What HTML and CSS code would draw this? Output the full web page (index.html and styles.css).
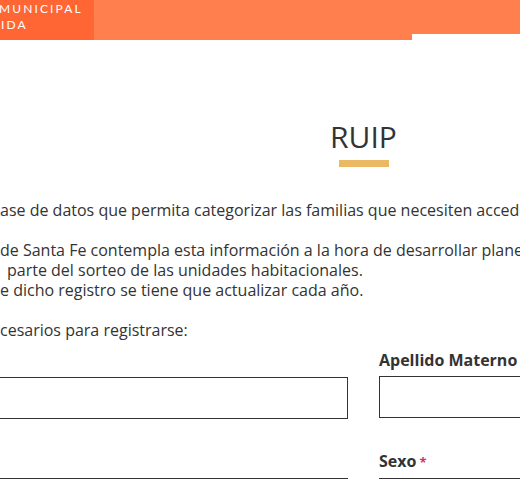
FILE: index.html
```html
<!DOCTYPE html>
<html lang="es">
<head>
    <meta charset="UTF-8">
    <meta name="viewport" content="width=device-width, initial-scale=1.0">
    <title>RUIP</title>
    <link rel="stylesheet" href="styles.css">
</head>
<body>
    <header class="header">
        <div class="marca">
            <span>MUNICIPAL</span>
            <span>IDA</span>
        </div>
        <div class="barra"></div>
        <div class="barra-fin"></div>
    </header>

    <main class="pagina">
        <h1 class="titulo">RUIP</h1>
        <div class="linea"></div>

        <div class="intro">
            <p>ase de datos que permita categorizar las familias que necesiten acceder a una vivienda.</p>
            <p>de Santa Fe contempla esta información a la hora de desarrollar planes de vivienda<br>
            <span class="sangria">parte del sorteo de las unidades habitacionales.</span><br>
            e dicho registro se tiene que actualizar cada año.</p>
            <p>cesarios para registrarse:</p>
        </div>

        <form class="formulario">
            <div class="campo">
                <label for="paterno">Apellido Paterno<span class="req">*</span></label>
                <input type="text" id="paterno">
            </div>
            <div class="campo">
                <label for="materno">Apellido Materno</label>
                <input type="text" id="materno">
            </div>
            <div class="campo">
                <label for="nacimiento">Fecha de Nacimiento<span class="req">*</span></label>
                <input type="text" id="nacimiento">
            </div>
            <div class="campo">
                <label for="sexo">Sexo<span class="req">*</span></label>
                <input type="text" id="sexo">
            </div>
        </form>
    </main>
</body>
</html>
```

FILE: styles.css
```css
body {
    margin: 0;
    font-family: "Open Sans", sans-serif;
    color: #333;
    background: #fff;
    overflow: hidden;
}
.header {
    display: flex;
    align-items: flex-start;
    height: 40px;
}
.marca {
    width: 94px;
    height: 40px;
    background-color: #ff6633;
    display: flex;
    flex-direction: column;
    color: #fff;
    font-family: "Lato", sans-serif;
    font-size: 12px;
    letter-spacing: 2.1px;
    line-height: 16px;
    padding-top: 1px;
    box-sizing: border-box;
}
.marca span:first-child {
    margin-left: -1px;
}
.marca span:last-child {
    margin-left: 1px;
}
.barra {
    flex: 1;
    height: 40px;
    background-color: #ff7f4f;
}
.barra-fin {
    width: 108px;
    height: 34px;
    background-color: #ff7f4f;
}
.pagina {
    width: 1425px;
    margin-left: -349px;
}
.titulo {
    margin: 76px 0 0;
    text-align: center;
    font-weight: 400;
    font-size: 30px;
    line-height: 42px;
    color: #333;
}
.linea {
    width: 50px;
    height: 7px;
    margin: 2px auto 0;
    background-color: #e9b964;
}
.intro {
    margin: 33px 0 0 349px;
    font-size: 16px;
    line-height: 20px;
    white-space: nowrap;
}
.intro p {
    margin: 0 0 20px;
}
.intro p:last-child {
    margin-bottom: 0;
}
.sangria {
    padding-left: 7px;
}
.formulario {
    display: grid;
    grid-template-columns: 1fr 1fr;
    column-gap: 31px;
    row-gap: 31px;
    margin-top: 9px;
}
.campo {
    display: flex;
    flex-direction: column;
}
.campo label {
    font-weight: 700;
    font-size: 16px;
    line-height: 22px;
    margin-bottom: 5px;
}
.req {
    color: #d4345a;
    font-size: 13px;
    margin-left: 3px;
}
.campo input {
    height: 42px;
    box-sizing: border-box;
    border: 1px solid #333;
    border-radius: 0;
    padding: 0 10px;
    font-family: "Open Sans", sans-serif;
    font-size: 16px;
}
```
